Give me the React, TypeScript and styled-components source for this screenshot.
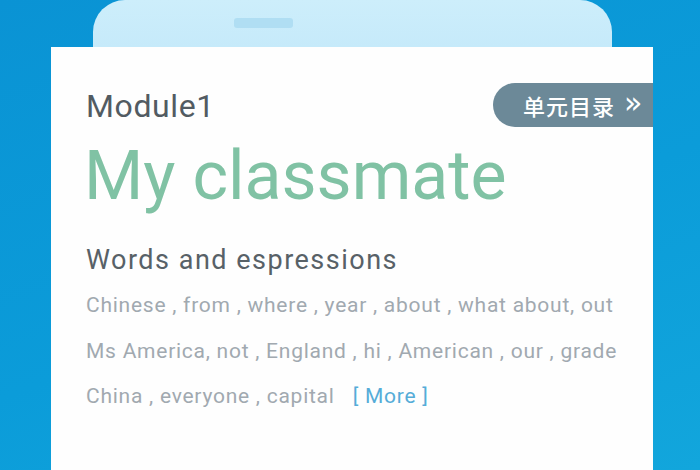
import React from "react";
import styled, { createGlobalStyle } from "styled-components";

const GlobalStyle = createGlobalStyle`
	html, body {
		margin: 0;
		padding: 0;
		width: 700px;
		height: 470px;
		overflow: hidden;
	}
	body {
		font-family: Roboto, "Noto Sans CJK SC", sans-serif;
	}
`;

const words = [
	"Chinese , from , where , year , about , what about, out",
	"Ms America, not , England , hi , American , our , grade",
	"China , everyone , capital",
];

const App = () => {
	return (
		<>
			<GlobalStyle />
			<Screen>
				<Tab>
					<Handle />
				</Tab>
				<Card>
					<TopRow>
						<ModuleTag>Module1</ModuleTag>
						<UnitBadge>
							<span>单元目录</span>
							<span className="arrows">»</span>
						</UnitBadge>
					</TopRow>
					<Title>My classmate</Title>
					<SectionTitle>Words and espressions</SectionTitle>
					<WordList>
						{words.map((line, i) => (
							<WordLine key={i}>
								{line}
								{i === words.length - 1 && <MoreLink>[ More ]</MoreLink>}
							</WordLine>
						))}
					</WordList>
				</Card>
			</Screen>
		</>
	);
};

export default App;

const Screen = styled.div`
	width: 700px;
	height: 470px;
	background: linear-gradient(160deg, #0a93d4 0%, #0b9cd9 55%, #12a6dc 100%);
	display: flex;
	flex-direction: column;
	align-items: flex-start;
	overflow: hidden;
`;

const Tab = styled.div`
	margin-left: 93px;
	width: 519px;
	height: 47px;
	flex-shrink: 0;
	box-sizing: border-box;
	padding: 18px 0 0 141px;
	background: linear-gradient(180deg, #cdeefb 0%, #c6eafa 100%);
	border-radius: 32px 32px 0 0;
`;

const Handle = styled.div`
	width: 59px;
	height: 10px;
	border-radius: 3px;
	background: #b0def3;
`;

const Card = styled.div`
	margin-left: 51px;
	width: 602px;
	flex: 1;
	background: #fefefe;
	padding: 36px 0 0 35px;
	box-sizing: border-box;
`;

const TopRow = styled.div`
	display: flex;
	align-items: center;
	justify-content: space-between;
	height: 44px;
`;

const ModuleTag = styled.div`
	font-size: 32px;
	color: #525b62;
	letter-spacing: 0.6px;
	margin-top: 2px;
`;

const UnitBadge = styled.div`
	height: 44px;
	width: 160px;
	box-sizing: border-box;
	border-radius: 22px 0 0 22px;
	background: #6c8998;
	color: #ffffff;
	display: flex;
	align-items: center;
	padding-left: 30px;
	gap: 9px;
	font-family: "Noto Sans CJK SC", sans-serif;
	font-size: 22px;
	font-weight: 500;
	letter-spacing: 1px;
	.arrows {
		font-family: "DejaVu Sans", sans-serif;
		font-size: 30px;
		font-weight: 400;
		margin-top: -6px;
	}
`;

const Title = styled.h1`
	margin: 9px 0 0 -2px;
	font-size: 68px;
	font-weight: 400;
	line-height: 80px;
	color: #80c2a4;
	letter-spacing: 0px;
`;

const SectionTitle = styled.h2`
	margin: 28px 0 0 0;
	font-size: 27px;
	font-weight: 400;
	line-height: 32px;
	color: #586167;
	letter-spacing: 1.5px;
`;

const WordList = styled.div`
	margin-top: 7px;
	display: flex;
	flex-direction: column;
`;

const WordLine = styled.div`
	font-size: 21px;
	line-height: 45.5px;
	color: #a1a9b0;
	letter-spacing: 0.75px;
	white-space: nowrap;
`;

const MoreLink = styled.span`
	margin-left: 18px;
	color: #55acd8;
`;
